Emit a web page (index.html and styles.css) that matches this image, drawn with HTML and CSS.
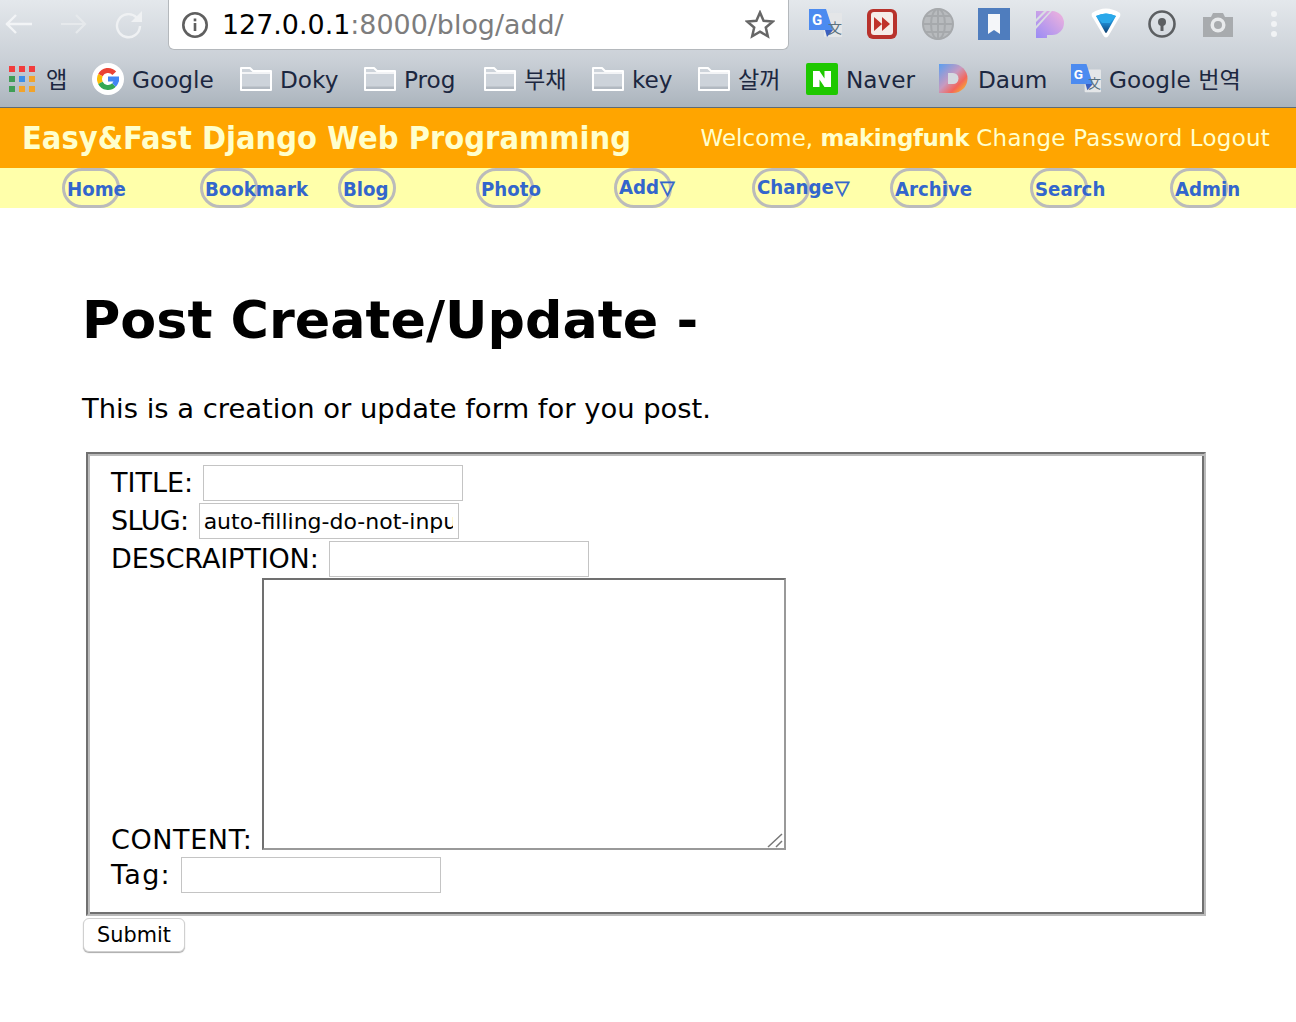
FILE: index.html
```html
<!DOCTYPE html>
<html lang="ko">
<head>
<meta charset="utf-8">
<title>Post Create/Update</title>
<link rel="stylesheet" href="styles.css">
</head>
<body>
<div class="browser">
  <div class="toolbar">
    <div class="navbtns">
      <svg class="nb" width="30" height="30" viewBox="0 0 30 30"><path d="M29 13H3M13 4l-9 9 9 9" fill="none" stroke="#f2f4f6" stroke-width="2.400"/></svg>
      <svg class="nb" width="30" height="30" viewBox="0 0 30 30"><path d="M2 13h24M17 4l9 9-9 9" fill="none" stroke="#e6e9ec" stroke-width="2.200"/></svg>
      <svg class="nb" width="30" height="30" viewBox="0 0 30 30"><path d="M25 15a11.500 11.500 0 1 1-3.400-8.500" fill="none" stroke="#eff1f3" stroke-width="2.400"/><path d="M27 0v11H16z" fill="#eff1f3"/></svg>
    </div>
    <div class="omnibox">
      <svg width="26" height="26" viewBox="0 0 26 26"><circle cx="13" cy="13" r="11.700" fill="none" stroke="#5f5f5f" stroke-width="2.600"/><rect x="11.700" y="11" width="2.600" height="8" fill="#5f5f5f"/><rect x="11.700" y="6.500" width="2.600" height="2.800" fill="#5f5f5f"/></svg>
      <div class="url"><span class="host">127.0.0.1</span>:8000/blog/add/</div>
      <svg width="30" height="30" viewBox="0 0 30 30"><path d="M15 2.500l3.600 8.300 9 .8-6.800 5.900 2 8.800L15 21.700l-7.800 4.600 2-8.800-6.800-5.900 9-.8z" fill="none" stroke="#666" stroke-width="2.500"/></svg>
    </div>
    <div class="exts">
      <svg width="33" height="33" viewBox="0 0 33 33"><rect x="15" y="5" width="18" height="24" rx="1" fill="#e4e6e8"/><path d="M0 1h17l7 21H0z" fill="#4c8bf0"/><path d="M16 22h8l-6 7z" fill="#3a5fc0"/><text x="3" y="17" class="ext-g">G</text><text x="19" y="25" class="ext-z">文</text></svg>
      <svg width="32" height="32" viewBox="0 0 32 32"><rect x="1" y="1" width="30" height="30" rx="6" fill="#b8322c"/><rect x="5" y="4" width="22" height="23" rx="3" fill="#f5ece8"/><path d="M8 9l8 7-8 7zM16 9l8 7-8 7z" fill="#c0322a"/></svg>
      <svg width="32" height="32" viewBox="0 0 32 32"><g fill="none" stroke="#a6a9ac" stroke-width="2"><circle cx="16" cy="16" r="15" fill="#b8bbbe"/><ellipse cx="16" cy="16" rx="7" ry="15"/><path d="M16 1v30M1 16h30M4 8h24M4 24h24"/></g></svg>
      <svg width="32" height="32" viewBox="0 0 32 32"><rect width="32" height="32" fill="#4f7dbe"/><path d="M10 6h12v20l-6-4-6 4z" fill="#f4f6f9"/></svg>
      <svg width="28" height="28" viewBox="0 0 28 28"><path d="M0 1h16a12 12 0 0 1 0 24h-5v3H0z" fill="url(#pg)"/><path d="M0 9L8 1h3L0 12zM0 16L14 1h2L0 19z" fill="#d9dde3"/><defs><linearGradient id="pg" x1="0" y1="1" x2="1" y2="0"><stop offset="0" stop-color="#9a8cf5"/><stop offset="1" stop-color="#f3b4dc"/></linearGradient></defs></svg>
      <svg width="32" height="32" viewBox="0 0 32 32"><defs><linearGradient id="dm" x1="0" y1="0" x2="0" y2="1"><stop offset="0" stop-color="#35b5f0"/><stop offset=".55" stop-color="#1c7fc4"/><stop offset="1" stop-color="#0d3f70"/></linearGradient></defs><path d="M2 5q14-9 28 0q1 3-1 5L19 27q-3 5-6 0L3 10q-2-2-1-5z" fill="#fff"/><path d="M6 8q10-5 20 0L17 24q-1 2-2 0z" fill="url(#dm)"/><path d="M6 8q10-5 20 0l-6 7h-8z" fill="#2aa8ea"/></svg>
      <svg width="28" height="28" viewBox="0 0 28 28"><circle cx="14" cy="14" r="12.500" fill="none" stroke="#5c5f62" stroke-width="2.600"/><circle cx="14" cy="12" r="4" fill="#5c5f62"/><rect x="12.500" y="13" width="3" height="8" fill="#5c5f62"/></svg>
      <svg width="30" height="28" viewBox="0 0 30 28"><path d="M0 7h8l2-4h10l2 4h8v20H0z" fill="#a8abae"/><circle cx="15" cy="15" r="7.500" fill="#e8eaec"/><circle cx="15" cy="15" r="4" fill="#a8abae"/></svg>
      <div class="dots"><i></i><i></i><i></i></div>
    </div>
  </div>
  <div class="bookmarks">
    <div class="bm">
      <svg width="26" height="26" viewBox="0 0 26 26"><path fill="#f23d3d" d="M0 0h6v6H0zM10 0h6v6h-6zM20 0h6v6h-6z"/><path fill="#3f9e55" d="M0 10h6v6H0zM0 20h6v6H0z"/><path fill="#3b8fe8" d="M10 10h6v6h-6z"/><path fill="#f2a32a" d="M20 10h6v6h-6zM10 20h6v6h-6zM20 20h6v6h-6z"/></svg>
      <span class="bm-apps">앱</span>
    </div>
    <div class="bm">
      <svg width="32" height="32" viewBox="0 0 32 32"><circle cx="16" cy="16" r="16" fill="#fff"/><g fill="none" stroke-width="5"><path d="M22.300 10.300A8.500 8.500 0 0 0 8.400 12.200" stroke="#ea4335"/><path d="M8.400 12.200a8.500 8.500 0 0 0 0 7.600" stroke="#fbbc05"/><path d="M8.400 19.800a8.500 8.500 0 0 0 13.600 2.200" stroke="#34a853"/><path d="M22 22a8.500 8.500 0 0 0 2.500-6" stroke="#4285f4"/></g><rect x="16" y="13.500" width="11" height="5" fill="#4285f4"/></svg>
      <span>Google</span>
    </div>
    <div class="bm"><svg class="folder" width="32" height="26" viewBox="0 0 32 26"><use href="#f"/></svg><span>Doky</span></div>
    <div class="bm"><svg class="folder" width="32" height="26" viewBox="0 0 32 26"><use href="#f"/></svg><span>Prog</span></div>
    <div class="bm"><svg class="folder" width="32" height="26" viewBox="0 0 32 26"><use href="#f"/></svg><span>부채</span></div>
    <div class="bm"><svg class="folder" width="32" height="26" viewBox="0 0 32 26"><use href="#f"/></svg><span>key</span></div>
    <div class="bm"><svg class="folder" width="32" height="26" viewBox="0 0 32 26"><use href="#f"/></svg><span>살꺼</span></div>
    <div class="bm">
      <svg width="32" height="32" viewBox="0 0 32 32"><rect width="32" height="32" rx="2" fill="#1ec800"/><path d="M7 8h6.500l5 7.500V8H25v16h-6.500l-5-7.500V24H7z" fill="#fff"/></svg>
      <span>Naver</span>
    </div>
    <div class="bm bm-daum">
      <svg width="29" height="29" viewBox="0 0 29 29"><defs><linearGradient id="dg" x1="0" y1="0" x2="1" y2="1"><stop offset="0" stop-color="#5a9ff0"/><stop offset=".45" stop-color="#c79ac0"/><stop offset=".7" stop-color="#f4665a"/><stop offset="1" stop-color="#f8d21c"/></linearGradient></defs><path d="M0 0h14a14.500 14.500 0 0 1 0 29H0z" fill="url(#dg)"/><path d="M9 9h5a5.500 5.500 0 0 1 0 11H9z" fill="#d5dae0"/></svg>
      <span>Daum</span>
    </div>
    <div class="bm">
      <svg width="30" height="30" viewBox="0 0 33 33"><rect x="15" y="6" width="18" height="25" rx="1" fill="#e4e6e8"/><path d="M0 0h17l7 22H0z" fill="#4c8bf0"/><path d="M16 22h8l-6 7z" fill="#3a5fc0"/><text x="3" y="16" class="ext-g">G</text><text x="19" y="26" class="ext-z">文</text></svg>
      <span>Google 번역</span>
    </div>
    <svg class="defs" width="0" height="0"><defs><g id="f"><path d="M1 24V2h9l3 3h18v19z" fill="#cdd3da" stroke="#fff" stroke-width="2" stroke-linejoin="round"/><path d="M2 20.500h28V23H2z" fill="#b2b9c1"/><path d="M2 7h28" stroke="#fff" stroke-width="1.500"/></g></defs></svg>
  </div>
</div>

<header class="site-head">
  <h2 class="brand">Easy&amp;Fast Django Web Programming</h2>
  <div class="account">Welcome, <b>makingfunk</b> <span>Change Password</span> <span>Logout</span></div>
</header>
<nav class="menu">
  <a class="item">Home</a>
  <a class="item">Bookmark</a>
  <a class="item">Blog</a>
  <a class="item">Photo</a>
  <a class="item up">Add<span class="tri">▽</span></a>
  <a class="item up">Change<span class="tri">▽</span></a>
  <a class="item">Archive</a>
  <a class="item">Search</a>
  <a class="item">Admin</a>
</nav>

<main class="content">
  <h1>Post Create/Update -</h1>
  <p class="lead">This is a creation or update form for you post.</p>
  <form>
    <fieldset class="box">
      <div class="row"><label>TITLE:</label><input class="field" type="text"></div>
      <div class="row"><label class="l-slug">SLUG:</label><input class="field" type="text" value="auto-filling-do-not-input"></div>
      <div class="row"><label class="l-desc">DESCRAIPTION:</label><input class="field" type="text"></div>
      <div class="row area"><label class="l-content">CONTENT:</label>
        <div class="ta-wrap"><textarea></textarea>
          <svg class="grip" width="16" height="16" viewBox="0 0 16 16"><path d="M1 15L15 2M9 15l6-6" stroke="#777" stroke-width="1.500" fill="none"/></svg>
        </div>
      </div>
      <div class="row tag"><label class="l-tag">Tag:</label><input class="field" type="text"></div>
    </fieldset>
    <button type="button" class="submit">Submit</button>
  </form>
</main>
</body>
</html>
```
FILE: styles.css
```css
* { box-sizing: border-box; }
html, body { margin: 0; padding: 0; background: #fff; }
body { font-family: "DejaVu Sans", "Noto Sans CJK KR", sans-serif; color: #000; height: 1022px; overflow: hidden; }

.browser { height: 108px; background: linear-gradient(#e4e8ec, #c9cfd6 58%, #abb4bd); border-bottom: 1px solid #5f6b75; }
.toolbar { height: 50px; display: flex; align-items: flex-start; }
.navbtns { width: 168px; height: 50px; display: flex; gap: 26px; padding: 11px 0 0 3px; }
.omnibox { width: 621px; height: 50px; background: #fff; border: 1px solid #b4b8bc; border-top: 0; border-radius: 0 0 6px 6px; display: flex; align-items: center; padding: 0 13px; }
.url { flex: 1; font-size: 26.900px; color: #7d7d7d; padding-left: 14px; white-space: nowrap; }
.host { color: #000; }
.exts { flex: 1; display: flex; align-items: center; gap: 24px; padding: 8px 0 0 20px; height: 40px; }
.exts svg:nth-child(n+5) { margin-left: 2px; }
.exts svg:nth-child(8) { margin-left: 3px; }
.ext-g { font: bold 15px "Roboto", sans-serif; fill: #fff; }
.ext-z { font: 14px "Noto Sans CJK SC", sans-serif; fill: #5b7280; }
.dots { display: flex; flex-direction: column; gap: 4px; margin-left: 14px; }
.dots i { display: block; width: 6px; height: 6px; border-radius: 50%; background: #f1f3f5; }

.bookmarks { height: 57px; display: grid; grid-template-columns: 83px 148px 124px 120px 108px 106px 108px 133px 132px auto; align-items: center; padding: 0 0 0 9px; color: #1c2740; white-space: nowrap; }
.bm { display: flex; align-items: center; gap: 8px; }
.bm span { font-size: 23.200px; line-height: 30px; padding-top: 2px; }
.bm .bm-apps { padding-left: 3px; }
.bm-daum { gap: 10px; }
.defs { position: absolute; }

.site-head { height: 60px; background: #ffa500; color: #ffffcc; display: flex; align-items: center; justify-content: space-between; padding: 0 26px 0 22px; }
.brand { margin: 0; font-size: 32.300px; font-weight: bold; font-stretch: condensed; white-space: nowrap; }
.account { font-size: 23px; white-space: nowrap; }
.account b { letter-spacing: -.5px; }
.account span { letter-spacing: .23px; }

.menu { height: 40px; background: #ffffaa; display: flex; gap: 80px; padding-left: 62px; }
.item { display: block; width: 58px; flex: none; height: 40px; border: 3px solid #bbb; border-radius: 20px; padding: 5px 0 0 2px; color: #3366cc; font-size: 20.200px; font-weight: bold; font-stretch: condensed; white-space: nowrap; line-height: 26px; }
.item:nth-child(n+8) { margin-left: 2px; }
.item.up { padding-top: 3px; }
.tri { font-size: 19px; font-stretch: normal; -webkit-text-stroke: .7px #3366cc; padding-left: 1px; }

.content { padding: 0 90px 0 84px; }
h1 { margin: 78px 0 0 -2px; font-size: 52.300px; line-height: 68px; font-weight: bold; white-space: nowrap; }
.lead { margin: 37px 0 0 -2px; font-size: 27.400px; line-height: 36px; }
form { margin-top: 25px; }
.box { margin: 0 0 2px 2px; width: 1120px; height: 464px; border: 2px solid; border-color: #707070 #bbb #bbb #707070; box-shadow: inset 2px 2px 0 #bbb, inset -2px -2px 0 #707070; padding: 10px 0 0 23px; display: block; }
.row { display: flex; align-items: center; height: 38px; font-size: 27px; gap: 10px; }
.row label { margin-top: -2px; }
.row.area { height: 272px; align-items: flex-end; }
.row.tag { margin-top: 6px; }
label { white-space: nowrap; }
.row .l-content { letter-spacing: .6px; margin-bottom: -5px; }
.l-slug { letter-spacing: -.6px; }
.l-desc { letter-spacing: -.12px; }
.l-tag { letter-spacing: 1.300px; }
.field { width: 260px; height: 36px; border: 1px solid #c4c4c4; padding: 0 5px 0 4px; font: 22px "DejaVu Sans", sans-serif; color: #000; background: #fff; }
.ta-wrap { position: relative; width: 524px; height: 272px; }
textarea { display: block; width: 524px; height: 272px; border: 2px solid; border-color: #707070 #999 #999 #707070; background: #fff; resize: none; }
.grip { position: absolute; right: 3px; bottom: 2px; }
.submit { display: block; width: 102px; height: 34px; border: 1px solid #d0d0d0; border-radius: 6px; background: #fff; box-shadow: 0 1px 1px #aaa; font: 20.800px "DejaVu Sans", sans-serif; color: #000; padding: 0; margin-left: -1px; }
```
